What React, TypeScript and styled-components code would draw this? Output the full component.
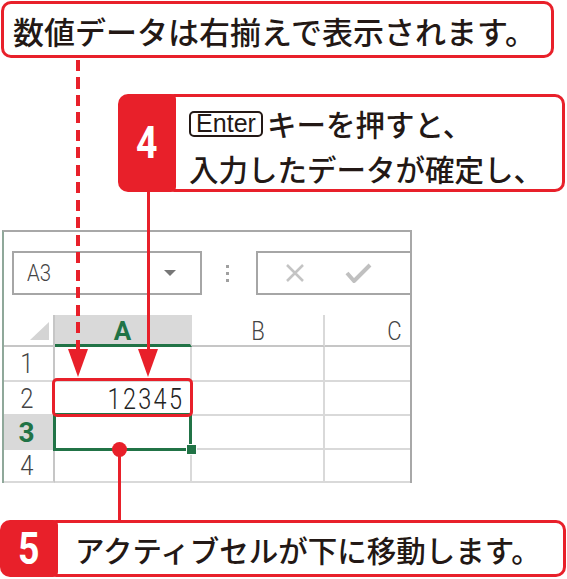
import React from 'react';
import styled, { createGlobalStyle } from 'styled-components';

const RED = '#e8202a';
const GREEN = '#217346';
const INK = '#231815';
const GRID = '#d9d9d9';

const Global = createGlobalStyle`
  html, body { margin: 0; padding: 0; background: #fff; }
  body {
    font-family: "Noto Sans CJK JP", "Noto Sans", sans-serif;
    color: ${INK};
  }
`;

const Page = styled.div`
  position: relative;
  width: 567px;
  height: 579px;
  overflow: hidden;
  display: flex;
  flex-direction: column;
  align-items: flex-start;
`;

const TopCallout = styled.div`
  box-sizing: border-box;
  margin: 1px 0 0 1px;
  width: 553px;
  height: 57px;
  border: 3px solid ${RED};
  border-radius: 10px;
  padding: 1px 0 0 9px;
  display: flex;
  align-items: center;
  font-size: 31px;
  font-weight: 500;
  line-height: 1;
  white-space: nowrap;
  background: #fff;
  position: relative;
  z-index: 2;
`;

const Step = styled.div<{ $top: number; $left: number; $width: number; $height: number }>`
  box-sizing: border-box;
  margin: ${(p) => p.$top}px 0 0 ${(p) => p.$left}px;
  width: ${(p) => p.$width}px;
  height: ${(p) => p.$height}px;
  display: flex;
  position: relative;
  z-index: 2;
`;

const StepTab = styled.div`
  flex: 0 0 58px;
  background: ${RED};
  border-radius: 10px 5px 5px 10px;
  color: #fff;
  font-family: Roboto, "Liberation Sans", sans-serif;
  font-weight: 700;
  font-size: 44px;
  display: flex;
  align-items: center;
  justify-content: center;
  position: relative;
  z-index: 1;
`;

const StepNum = styled.span`
  display: inline-block;
  transform: scaleX(0.85);
`;

const StepBody = styled.div<{ $pl: number; $pt?: number }>`
  flex: 1;
  margin-left: -12px;
  box-sizing: border-box;
  border: 3px solid ${RED};
  border-radius: 10px;
  background: #fff;
  padding: ${(p) => p.$pt ?? 0}px 0 0 ${(p) => p.$pl}px;
  display: flex;
  flex-direction: column;
  justify-content: center;
  font-size: 29.5px;
  font-weight: 500;
  line-height: 45px;
  white-space: nowrap;
`;

const Line = styled.div`
  display: flex;
  align-items: center;
  height: 45px;
`;

const Key = styled.span`
  box-sizing: border-box;
  display: inline-flex;
  align-items: center;
  justify-content: center;
  height: 26px;
  width: 74px;
  border: 2px solid ${INK};
  border-radius: 5px;
  margin-right: 4px;
  font-family: "Liberation Sans", Arial, sans-serif;
  font-weight: 400;
  font-size: 25px;
  line-height: 1;
`;

const Sheet = styled.div`
  box-sizing: border-box;
  margin: 38px 0 0 2px;
  width: 410px;
  height: 253px;
  border-top: 2px solid #a8a8a8;
  border-left: 2px solid #8fa89a;
  border-right: 2px solid #a8a8a8;
  display: flex;
  flex-direction: column;
  font-family: Roboto, "Liberation Sans", Arial, sans-serif;
  font-weight: 300;
  overflow: hidden;
  color: #333;
`;

const Toolbar = styled.div`
  box-sizing: border-box;
  flex: 0 0 83px;
  display: flex;
  align-items: flex-start;
  padding: 19px 0 0 8px;
`;

const NameBox = styled.div`
  box-sizing: border-box;
  width: 190px;
  height: 44px;
  border: 2px solid #a6a6a6;
  display: flex;
  align-items: center;
  justify-content: space-between;
  padding: 0 24px 0 11px;
  font-size: 24px;
  color: #444;
`;

const Narrow = styled.span<{ $sx?: number }>`
  display: inline-block;
  transform: scaleX(${(p) => p.$sx ?? 0.85});
`;

const DropArrow = styled.span`
  width: 0;
  height: 0;
  border-left: 6px solid transparent;
  border-right: 6px solid transparent;
  border-top: 6px solid #777;
`;

const Dots = styled.div`
  margin: 14px 0 0 24px;
  width: 4px;
  display: flex;
  flex-direction: column;
  gap: 4px;
`;

const Dot = styled.span`
  width: 3px;
  height: 3px;
  background: #a0a0a0;
`;

const FormulaBox = styled.div`
  box-sizing: border-box;
  flex: 1;
  margin-left: 26px;
  height: 44px;
  border: 2px solid #a6a6a6;
  border-right: none;
  display: flex;
  align-items: center;
  padding-left: 27px;
  gap: 40px;
`;

const Grid = styled.div`
  display: grid;
  grid-template-columns: 51px 137px 133px 140px;
  grid-template-rows: 32px 35px 34px 34px 33px;
`;

const Cell = styled.div<{ $align?: 'left' | 'right' }>`
  box-sizing: border-box;
  border-right: 2px solid ${GRID};
  border-bottom: 2px solid ${GRID};
  display: flex;
  align-items: center;
  justify-content: ${(p) => (p.$align === 'right' ? 'flex-end' : 'flex-start')};
  padding-right: ${(p) => (p.$align === 'right' ? '9px' : '0')};
`;

const ColHead = styled.div<{ $active?: boolean }>`
  box-sizing: border-box;
  background: ${(p) => (p.$active ? '#d9d9d9' : '#fff')};
  border-right: 2px solid ${GRID};
  border-bottom: ${(p) => (p.$active ? `3px solid ${GREEN}` : '2px solid #c6c6c6')};
  color: ${(p) => (p.$active ? GREEN : '#444')};
  font-weight: ${(p) => (p.$active ? 700 : 300)};
  font-size: 26px;
  display: flex;
  align-items: center;
  justify-content: center;
  padding-top: 2px;
`;

const Corner = styled.div`
  box-sizing: border-box;
  border-right: 2px solid #c6c6c6;
  border-bottom: 2px solid #c6c6c6;
  position: relative;
  &::after {
    content: '';
    position: absolute;
    right: 4px;
    bottom: 5px;
    width: 0;
    height: 0;
    border-left: 19px solid transparent;
    border-bottom: 18px solid #d4d4d4;
  }
`;

const RowHead = styled.div<{ $active?: boolean }>`
  box-sizing: border-box;
  background: ${(p) => (p.$active ? '#d9d9d9' : '#fff')};
  border-right: 2px solid #c6c6c6;
  border-bottom: 2px solid ${GRID};
  color: ${(p) => (p.$active ? GREEN : '#444')};
  font-weight: ${(p) => (p.$active ? 700 : 300)};
  font-size: 28px;
  display: flex;
  align-items: center;
  justify-content: center;
  padding-right: 4px;
`;

const Value = styled.span`
  display: inline-block;
  font-size: 30px;
  letter-spacing: 3px;
  transform: scaleX(0.78);
  transform-origin: right center;
  color: #222;
  margin-right: -3px;
`;

/* overlays */
const VLine = styled.div<{ $dashed?: boolean }>`
  position: absolute;
  z-index: 1;
  background: ${(p) =>
    p.$dashed
      ? `repeating-linear-gradient(to bottom, ${RED} 0 11px, transparent 11px 17.5px)`
      : RED};
`;

const ArrowHead = styled.div`
  position: absolute;
  z-index: 3;
  width: 0;
  height: 0;
  border-left: 10px solid transparent;
  border-right: 10px solid transparent;
  border-top: 28px solid ${RED};
`;

const RedFrame = styled.div`
  position: absolute;
  z-index: 4;
  box-sizing: border-box;
  border: 3px solid ${RED};
  border-radius: 5px;
`;

const Selection = styled.div`
  position: absolute;
  z-index: 3;
  box-sizing: border-box;
  border: 3px solid ${GREEN};
`;

const FillHandle = styled.div`
  position: absolute;
  z-index: 4;
  box-sizing: border-box;
  width: 11px;
  height: 11px;
  background: ${GREEN};
  border: 1.5px solid #fff;
`;

const Knob = styled.div`
  position: absolute;
  z-index: 5;
  width: 15px;
  height: 15px;
  border-radius: 50%;
  background: ${RED};
`;

export default function App() {
  return (
    <Page>
      <Global />
      <TopCallout>数値データは右揃えで表示されます。</TopCallout>

      <Step $top={36} $left={118} $width={447} $height={98}>
        <StepTab>
          <StepNum>4</StepNum>
        </StepTab>
        <StepBody $pl={22} $pt={6}>
          <Line>
            <Key>Enter</Key>キーを押すと、
          </Line>
          <Line>入力したデータが確定し、</Line>
        </StepBody>
      </Step>

      <Sheet>
        <Toolbar>
          <NameBox>
            <Narrow>A3</Narrow>
            <DropArrow />
          </NameBox>
          <Dots>
            <Dot />
            <Dot />
            <Dot />
          </Dots>
          <FormulaBox>
            <svg width="20" height="18" viewBox="0 0 20 18">
              <path d="M2 1 L18 17 M18 1 L2 17" stroke="#c4c4c4" strokeWidth="2.5" fill="none" />
            </svg>
            <svg width="27" height="20" viewBox="0 0 27 20">
              <path d="M2 10 L9 18 L25 2" stroke="#c0c0c0" strokeWidth="4" fill="none" strokeLinejoin="round" />
            </svg>
          </FormulaBox>
        </Toolbar>
        <Grid>
          <Corner />
          <ColHead $active>A</ColHead>
          <ColHead>
            <Narrow>B</Narrow>
          </ColHead>
          <ColHead>
            <Narrow>C</Narrow>
          </ColHead>

          <RowHead>
            <Narrow>1</Narrow>
          </RowHead>
          <Cell />
          <Cell />
          <Cell />

          <RowHead>
            <Narrow>2</Narrow>
          </RowHead>
          <Cell $align="right">
            <Value>12345</Value>
          </Cell>
          <Cell />
          <Cell />

          <RowHead $active>3</RowHead>
          <Cell />
          <Cell />
          <Cell />

          <RowHead>
            <Narrow>4</Narrow>
          </RowHead>
          <Cell />
          <Cell />
          <Cell />
        </Grid>
      </Sheet>

      <Step $top={37} $left={0} $width={566} $height={57}>
        <StepTab>
          <StepNum>5</StepNum>
        </StepTab>
        <StepBody $pl={26} $pt={2}>
          <Line>アクティブセルが下に移動します。</Line>
        </StepBody>
      </Step>

      <VLine $dashed style={{ left: 76, top: 60, width: 4, height: 292 }} />
      <ArrowHead style={{ left: 68, top: 349 }} />
      <VLine style={{ left: 147, top: 190, width: 3, height: 162 }} />
      <ArrowHead style={{ left: 138, top: 349 }} />

      <Selection style={{ left: 53, top: 413, width: 139, height: 38 }} />
      <FillHandle style={{ left: 186, top: 444 }} />
      <RedFrame style={{ left: 52, top: 378, width: 141, height: 39 }} />
      <Knob style={{ left: 112, top: 442 }} />
      <VLine style={{ left: 118, top: 449, width: 3, height: 74 }} />
    </Page>
  );
}
